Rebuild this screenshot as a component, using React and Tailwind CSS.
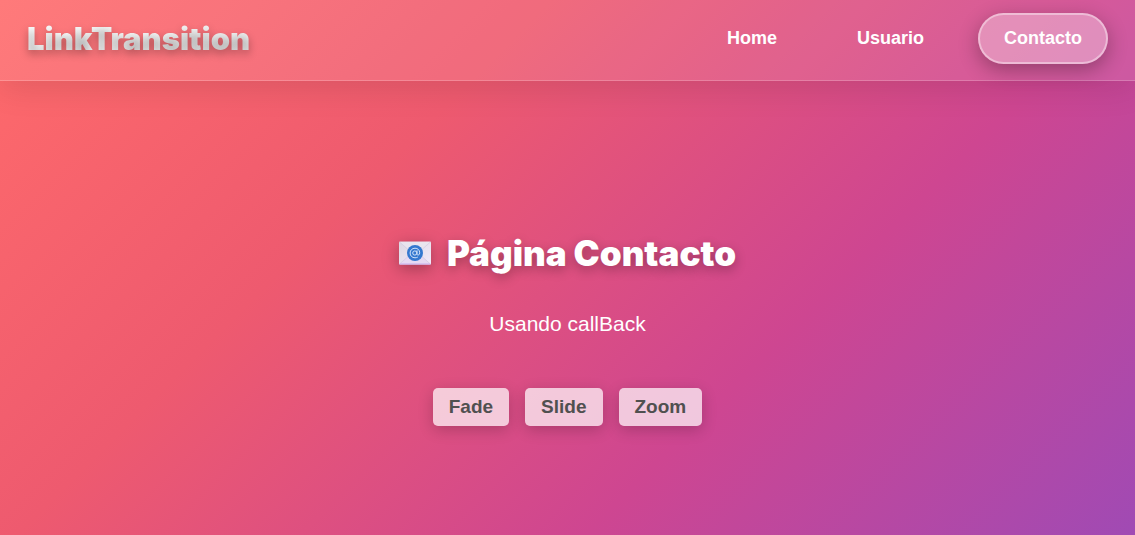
import React from "react";

const links = [
  { label: "Home", active: false },
  { label: "Usuario", active: false },
  { label: "Contacto", active: true },
];

const transitions = ["Fade", "Slide", "Zoom"];

function MailIcon() {
  return (
    <svg
      viewBox="0 0 32 24"
      className="h-6 w-8 drop-shadow-[0_4px_8px_rgba(0,0,0,0.3)]"
      role="img"
      aria-label="Correo"
    >
      <defs>
        <linearGradient id="paper" x1="0" y1="0" x2="1" y2="1">
          <stop offset="0" stopColor="#dcd8e2" />
          <stop offset="1" stopColor="#f3eafa" />
        </linearGradient>
      </defs>
      <rect x="0" y="0.5" width="32" height="23" rx="1.2" fill="url(#paper)" />
      <path d="M0.6 23 L12 12 H20 L31.4 23 Z" fill="#e6daf3" />
      <path d="M0.6 1 L16 14 L31.4 1 Z" fill="#e9e5ee" />
      <path d="M0.6 1 L13 12 M31.4 1 L19 12 M0.6 23 L12 13 M31.4 23 L20 13" stroke="#d0c6dd" strokeWidth="0.6" fill="none" />
      <path d="M0.5 23 H31.5" stroke="#cdb5ee" strokeWidth="1.2" />
      <circle cx="16" cy="12" r="8" fill="#3478cf" />
      <circle cx="15.8" cy="12" r="2.1" stroke="#d5e5fa" strokeWidth="1" fill="none" />
      <path
        d="M18 9.7 V12.8 C18 14.6 20.7 14.6 20.7 11.8 C20.7 9 18.7 7.2 16 7.2 C13.2 7.2 11.1 9.3 11.1 12 C11.1 14.8 13.2 16.8 16 16.8 C17 16.8 17.8 16.6 18.5 16.2"
        stroke="#d5e5fa"
        strokeWidth="1"
        strokeLinecap="round"
        fill="none"
      />
    </svg>
  );
}

export default function App() {
  return (
    <div className="flex min-h-screen flex-col bg-[linear-gradient(135deg,#ff6b6b_0%,#ee5a6f_33%,#ce4691_67%,#a04ab4_100%)] font-['Liberation_Sans',Arial,sans-serif] text-white">
      <header className="flex items-center justify-between border-b border-white/20 bg-white/10 px-[27px] pt-[13px] pb-4 shadow-[0_8px_32px_rgba(0,0,0,0.1)]">
        <a
          href="#inicio"
          className="bg-[linear-gradient(45deg,#ffffff,#f0f0f0)] bg-clip-text font-['Inter',sans-serif] text-[31px] leading-[44px] font-black text-transparent text-shadow-[0_4px_8px_rgba(0,0,0,0.3)]"
        >
          LinkTransition
        </a>
        <nav className="flex items-center gap-7">
          {links.map((link) => (
            <a
              key={link.label}
              href={"#" + link.label.toLowerCase()}
              aria-current={link.active ? "page" : undefined}
              className={
                link.active
                  ? "rounded-full border-2 border-white/40 bg-white/32 px-6 py-3 text-lg leading-[23px] font-bold shadow-[0_6px_20px_rgba(0,0,0,0.3)]"
                  : "rounded-full border-2 border-transparent px-6 py-3 text-lg leading-[23px] font-bold"
              }
            >
              {link.label}
            </a>
          ))}
        </nav>
      </header>

      <main className="flex grow flex-col items-center px-4 pt-[149px] text-center">
        <h1 className="flex items-center gap-4 font-['Inter',sans-serif] text-[35px] leading-[46px] font-black text-shadow-[0_4px_12px_rgba(0,0,0,0.3)]">
          <MailIcon />
          Página Contacto
        </h1>
        <p className="mt-8 text-[21px] leading-8">Usando callBack</p>
        <div className="mt-12 flex gap-4">
          {transitions.map((name) => (
            <button
              key={name}
              type="button"
              className="rounded-[5px] bg-white/70 px-4 py-2 text-[19px] leading-[22px] font-bold text-[#505050] shadow-[0_4px_15px_rgba(0,0,0,0.2)]"
            >
              {name}
            </button>
          ))}
        </div>
      </main>
    </div>
  );
}
